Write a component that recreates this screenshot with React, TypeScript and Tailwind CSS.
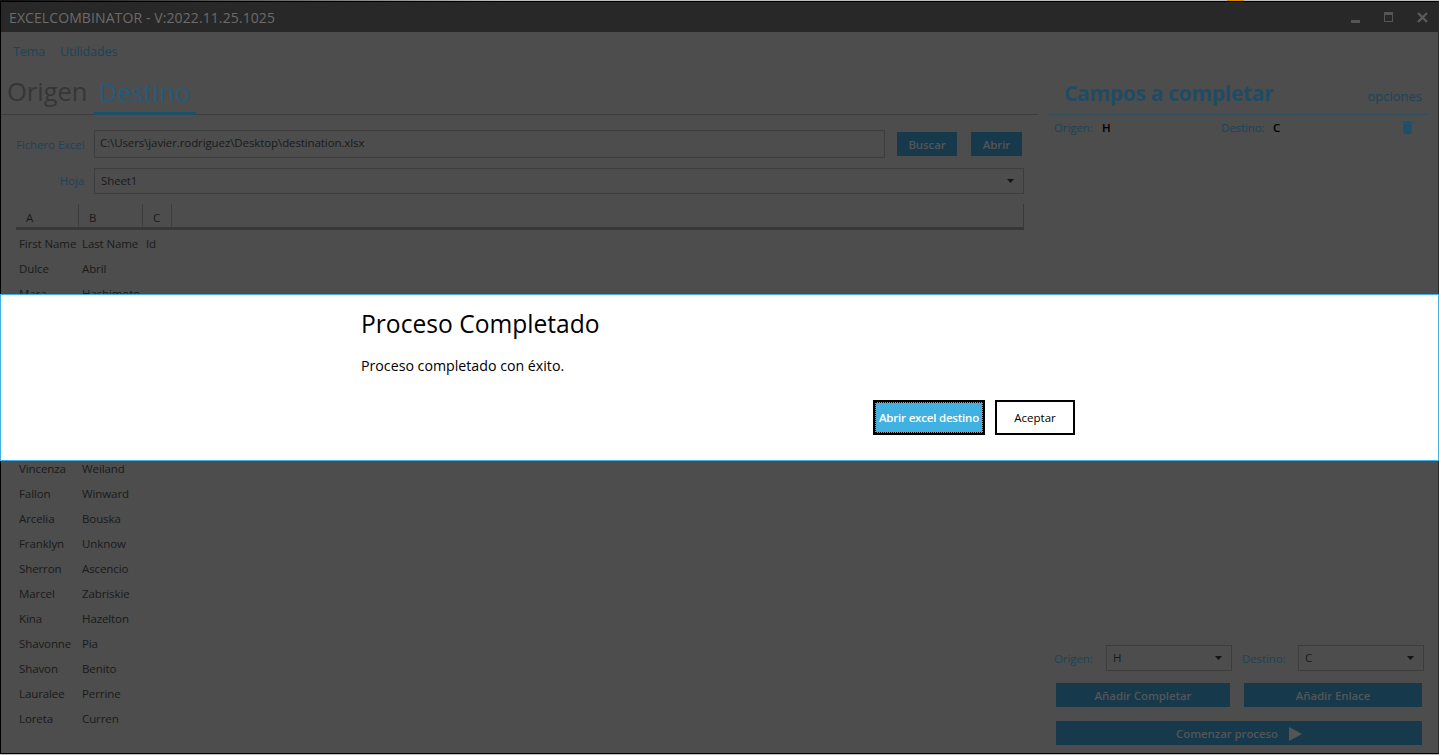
import React from 'react';

const rows = [
  ['First Name', 'Last Name', 'Id'],
  ['Dulce', 'Abril', ''],
  ['Mara', 'Hashimoto', ''],
  ['', '', ''],
  ['', '', ''],
  ['', '', ''],
  ['', '', ''],
  ['', '', ''],
  ['', '', ''],
  ['Vincenza', 'Weiland', ''],
  ['Fallon', 'Winward', ''],
  ['Arcelia', 'Bouska', ''],
  ['Franklyn', 'Unknow', ''],
  ['Sherron', 'Ascencio', ''],
  ['Marcel', 'Zabriskie', ''],
  ['Kina', 'Hazelton', ''],
  ['Shavonne', 'Pia', ''],
  ['Shavon', 'Benito', ''],
  ['Lauralee', 'Perrine', ''],
  ['Loreta', 'Curren', ''],
];

const Caret = () => (
  <svg width="7" height="4" viewBox="0 0 7 4" className="shrink-0">
    <path d="M0 0h7L3.5 4z" fill="#151515" />
  </svg>
);

const DimButton = ({ label, className }: { label: string; className: string }) => (
  <div className={`h-6 pt-px bg-[#163a4c] flex items-center justify-center font-semibold text-[#555555] ${className}`}>
    {label}
  </div>
);

const App: React.FC = () => {
  return (
    <div className="relative w-[1439px] h-[755px] overflow-hidden bg-[#4d4d4d] text-[11.5px] tracking-[-0.1px] text-[#1a1a1a] font-['Open_Sans','Noto_Sans',sans-serif] flex flex-col">
      {/* window top edge */}
      <div className="h-px bg-[#bdbdbd] flex shrink-0">
        <div className="w-[500px] bg-gradient-to-r from-[#111111] to-[#bdbdbd]" />
        <div className="w-[727px]" />
        <div className="w-[17px] bg-[#d08a10]" />
      </div>
      <div className="flex-1 min-h-0 flex flex-col border border-black border-r-[#2a2a2a]">
        {/* title bar */}
        <div className="h-[30px] shrink-0 bg-[#282828] flex items-center justify-between pl-2 pr-[10px]">
          <span className="text-[14px] text-[#6b6b6b] tracking-[0.1px]">EXCELCOMBINATOR - V:2022.11.25.1025</span>
          <div className="flex items-center gap-[24px]">
            <svg width="9" height="12" viewBox="0 0 9 12">
              <rect x="0" y="9" width="9" height="3" fill="#555555" />
            </svg>
            <svg width="9" height="10" viewBox="0 0 9 10">
              <path d="M0 0h9v10H0zM1 3v6h7V3z" fill="#555555" fillRule="evenodd" />
            </svg>
            <svg width="11" height="11" viewBox="0 0 11 11">
              <path d="M1 1l9 9M10 1l-9 9" stroke="#5a5a5a" strokeWidth="2.4" />
            </svg>
          </div>
        </div>

        <div className="flex-1 min-h-0 flex">
          {/* left column */}
          <div className="w-[1037px] shrink-0 flex flex-col">
            <div className="h-[40px] pt-px flex items-center gap-[15px] pl-3 text-[12.5px] text-[#1b4459]">
              <span>Tema</span>
              <span>Utilidades</span>
            </div>
            <div className="h-[43px] flex items-end border-b border-[#3d3d3d] pl-[6px] text-[25.5px] leading-[38px] tracking-normal">
              <span className="h-[42px] text-[#363636] pr-[6px]">Origen</span>
              <span className="h-[42px] w-[102px] -mb-px text-center text-[#265a76] border-b-[3px] border-[#1c5069]">Destino</span>
            </div>

            <div className="flex items-center pl-[15px] mt-[15px]">
              <span className="w-[70px] text-[#1b4459] mt-[2px] whitespace-nowrap">Fichero Excel</span>
              <div className="ml-[8px] w-[791px] h-[28px] border border-[#3d3d3d] flex items-center pl-[5px] pb-[3px]">
                C:\Users\javier.rodriguez\Desktop\destination.xlsx
              </div>
              <DimButton label="Buscar" className="ml-3 w-[60px]" />
              <DimButton label="Abrir" className="ml-[14px] w-[51px]" />
            </div>

            <div className="flex items-center pl-[15px] mt-[10px]">
              <span className="w-[68px] text-right text-[#1b4459]">Hoja</span>
              <div className="ml-[10px] w-[930px] h-[26px] border border-[#3d3d3d] flex items-center justify-between pl-[6px] pr-[9px]">
                <span>Sheet1</span>
                <Caret />
              </div>
            </div>

            <div className="ml-[15px] mt-[10px] w-[1008px] h-[26px] flex border-b-[3px] border-[#383838] border-r border-r-[#383838] font-medium">
              <div className="w-[63px] border-r border-[#3d3d3d] pl-[10px] pt-[5px]">A</div>
              <div className="w-[64px] border-r border-[#3d3d3d] pl-[10px] pt-[5px]">B</div>
              <div className="w-[29px] border-r border-[#3d3d3d] pl-[10px] pt-[5px]">C</div>
            </div>

            <div className="flex flex-col mt-px">
              {rows.map((row, i) => (
                <div key={i} className="h-[25px] flex items-center">
                  <span className="ml-[18px] w-[63px] whitespace-nowrap">{row[0]}</span>
                  <span className="w-[64px] whitespace-nowrap">{row[1]}</span>
                  <span>{row[2]}</span>
                </div>
              ))}
            </div>
          </div>

          {/* right column */}
          <div className="flex-1 flex flex-col pl-[11px] pr-[9px]">
            <div className="mt-[40px] h-[43px] border-b border-[#2f4f5f] flex items-center justify-between pl-[15px] pr-[7px]">
              <span className="text-[21px] font-bold text-[#1f4c64] tracking-[-0.3px] mt-[2px]">Campos a completar</span>
              <span className="text-[13px] text-[#1b4459] tracking-normal mt-[7px]">opciones</span>
            </div>
            <div className="flex items-center h-[26px] pl-[5px]">
              <span className="text-[#1b4459] w-[48px]">Origen:</span>
              <span className="font-semibold text-black w-[119px]">H</span>
              <span className="text-[#1b4459] w-[52px]">Destino:</span>
              <span className="font-semibold text-black flex-1">C</span>
              <svg width="17" height="17" viewBox="0 0 24 24" className="mr-[13px] -mt-[2px]">
                <path d="M19 4h-3.5l-1-1h-5l-1 1H5v2h14M6 19a2 2 0 0 0 2 2h8a2 2 0 0 0 2-2V7H6v12z" fill="#1c5069" />
              </svg>
            </div>

            <div className="mt-auto flex items-center pl-[5px]">
              <span className="text-[#1b4459] w-[52px] mt-[2px]">Origen:</span>
              <div className="w-[126px] h-[26px] border border-[#3d3d3d] flex items-center justify-between pl-[6px] pr-[9px]">
                <span>H</span>
                <Caret />
              </div>
              <span className="text-[#1b4459] ml-[10px] w-[56px] mt-[2px]">Destino:</span>
              <div className="w-[126px] h-[26px] border border-[#3d3d3d] flex items-center justify-between pl-[6px] pr-[9px]">
                <span>C</span>
                <Caret />
              </div>
            </div>
            <div className="flex gap-[14px] mt-3 pl-[7px]">
              <DimButton label="Añadir Completar" className="w-[174px]" />
              <DimButton label="Añadir Enlace" className="w-[178px]" />
            </div>
            <div className="mt-[14px] mb-[8px] ml-[7px] w-[366px] h-6 pt-px bg-[#163a4c] flex items-center justify-center gap-[11px] font-semibold text-[#555555]">
              <span>Comenzar proceso</span>
              <svg width="13" height="14" viewBox="0 0 13 14">
                <path d="M0 0l13 7-13 7z" fill="#555555" />
              </svg>
            </div>
          </div>
        </div>
      </div>
      <div className="h-px bg-[#bdbdbd] shrink-0" />

      {/* modal dialog */}
      <div className="absolute left-0 right-0 top-[294px] h-[167px] bg-white border border-[#41b1e1] flex flex-col pl-[360px] text-black tracking-normal">
        <h1 className="mt-[13px] text-[24.6px] leading-[32px] font-normal">Proceso Completado</h1>
        <p className="mt-[16px] text-[14.2px] leading-[20px]">Proceso completado con éxito.</p>
        <div className="mt-[24px] flex gap-[10px] pl-[512px]">
          <button className="w-[112px] h-[35px] bg-[#41b1e1] border-2 border-black outline-1 outline-dotted -outline-offset-3 outline-black text-white text-[11.5px] tracking-[-0.2px] font-semibold whitespace-nowrap">
            Abrir excel destino
          </button>
          <button className="w-[80px] h-[35px] bg-white border-2 border-black text-black text-[11.5px] font-medium">
            Aceptar
          </button>
        </div>
      </div>
    </div>
  );
};

export default App;
